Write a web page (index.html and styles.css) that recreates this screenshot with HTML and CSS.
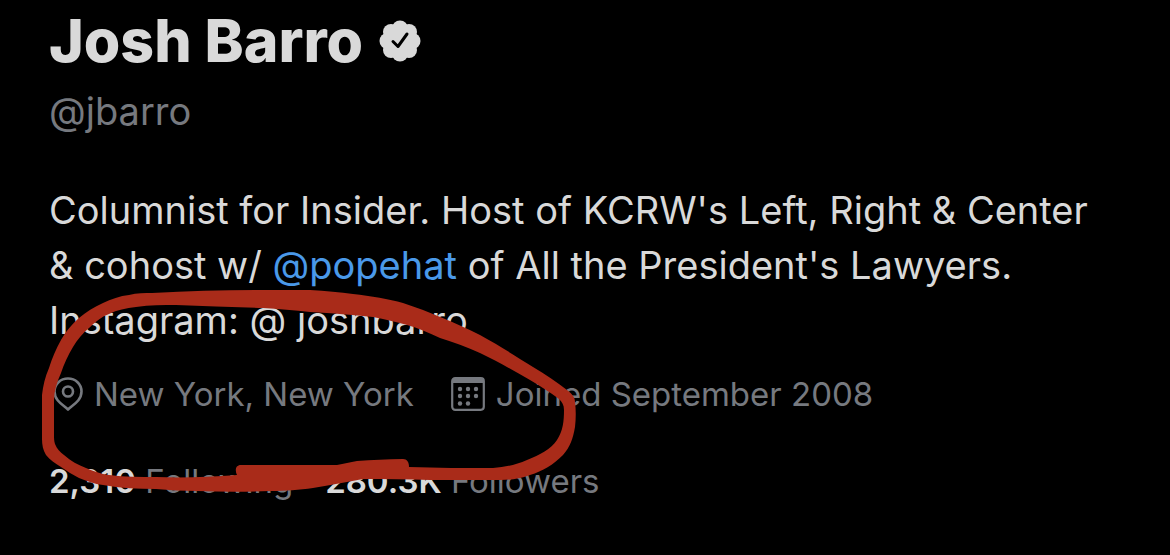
FILE: index.html
```html
<!DOCTYPE html>
<html lang="en">
<head>
<meta charset="utf-8">
<title>Josh Barro (@jbarro)</title>
<link rel="stylesheet" href="styles.css">
</head>
<body>
<main class="profile">
    <div class="name-row">
        <h1 class="name">Josh Barro</h1>
        <svg class="verified" viewBox="0 0 42 42" role="img" aria-label="Verified">
            <g fill="#d9d9d9">
                <circle cx="21" cy="21" r="16"/>
                <circle cx="21" cy="8.500" r="8"/>
                <circle cx="30" cy="12" r="8"/>
                <circle cx="33.500" cy="21" r="8"/>
                <circle cx="30" cy="30" r="8"/>
                <circle cx="21" cy="33.500" r="8"/>
                <circle cx="12" cy="30" r="8"/>
                <circle cx="8.500" cy="21" r="8"/>
                <circle cx="12" cy="12" r="8"/>
            </g>
            <path d="M14 21.500L19 26.500L28 14" fill="none" stroke="#000" stroke-width="3" stroke-linecap="round" stroke-linejoin="round"/>
        </svg>
    </div>
    <div class="handle">@jbarro</div>

    <p class="bio">
        Columnist for Insider. Host of KCRW's Left, Right &amp; Center<br>
        &amp; cohost w/ <a href="#popehat">@popehat</a> of All the President's Lawyers.<br>
        Instagram: @ joshbarro
    </p>

    <div class="meta">
        <span class="meta-item">
            <svg class="pin" viewBox="0 0 34 36" aria-hidden="true">
                <g fill="none" stroke="#76797f" stroke-width="2.6" stroke-linejoin="round">
                    <path d="M19 33.500C15 29.500 5.500 25 5.500 15.500C5.500 8 11.500 2.500 19 2.500C26.500 2.500 32.500 8 32.500 15.500C32.500 25 23 29.500 19 33.500Z"/>
                    <circle cx="19" cy="15.500" r="5"/>
                </g>
            </svg>
            New York, New York
        </span>
        <span class="meta-item">
            <svg class="calendar" viewBox="0 0 34 34" aria-hidden="true">
                <rect x="1.200" y="1.200" width="31.600" height="31.600" rx="3" fill="none" stroke="#76797f" stroke-width="2.200"/>
                <path d="M1 6V4Q1 1 4 1H30Q33 1 33 4V6Z" fill="#76797f"/>
                <g fill="#76797f">
                    <circle cx="9" cy="12" r="2.200"/>
                    <circle cx="17" cy="12" r="2.200"/>
                    <circle cx="25" cy="12" r="2.200"/>
                    <circle cx="9" cy="19" r="2.200"/>
                    <circle cx="17" cy="19" r="2.200"/>
                    <circle cx="25" cy="19" r="2.200"/>
                    <circle cx="9" cy="26.500" r="2.200"/>
                    <circle cx="17" cy="26.500" r="2.200"/>
                </g>
            </svg>
            Joined September 2008
        </span>
    </div>

    <div class="counts">
        <span><b>2,310</b> Following</span>
        <span><b>280.3K</b> Followers</span>
    </div>

    <!-- red marker loop around the location -->
    <svg class="marker" viewBox="0 0 540 206" aria-hidden="true">
        <path transform="translate(-40 -288)" fill="#a92b19" fill-rule="evenodd" d="M42 413V395C43 386 45 377 49 368C52 358 56 349 61 340C66 331 72 324 79 318C86 312 94 307 103 303C111 299 120 296 129 295C137 293 145 293 152 293C190 291 225 290 263 290C285 290 298 290 310 290C326 291 340 292 353 294C371 296 389 299 403 303C430 312 456 323 480 335C500 346 517 357 533 367C546 375 557 382 567 390C572 394 575 397 575 402C576 410 576 418 575 427C573 439 570 447 563 455C553 465 543 471 530 475C519 479 511 480 500 480H430C408 479 385 479 363 479C347 482 331 485 313 488C299 490 286 491 270 491C246 492 222 492 197 491C183 491 170 490 156 489C138 489 120 488 103 485C94 484 87 481 79 478C73 475 67 471 61 467C55 463 50 460 46 455C43 450 42 445 42 439Z
        M54 400V435C54 438 54 441 55 444C57 449 60 452 64 455C71 461 78 465 86 468C93 471 101 474 109 475C125 477 140 477 156 477C183 478 210 477 237 475C235 471 235 465 241 465H337C344 464 350 462 357 461C372 460 387 459 403 459C407 459 409 462 409 467C437 468 465 468 493 468C505 467 516 465 527 460C540 455 551 449 557 440C563 431 564 421 564 410C564 405 562 402 559 399C550 392 540 386 530 380C514 371 497 361 480 353C467 347 453 342 440 338C429 333 418 328 407 325C396 322 385 319 373 317C352 315 333 313 310 312C294 310 279 309 263 308C234 307 205 306 176 305C163 305 150 305 136 307C126 308 117 310 109 314C101 317 95 322 89 328C83 333 77 340 73 347C68 355 64 364 61 373C57 382 54 391 54 400Z"/>
    </svg>
</main>
</body>
</html>
```
FILE: styles.css
```css
body {
  margin: 0;
  background-color: #000;
  color: #d9d9d9;
  font-family: Inter, "Liberation Sans", sans-serif;
}

.profile {
  position: relative;
  padding: 7px 49px 32px;
}

.name-row {
  display: flex;
  align-items: center;
  gap: 16px;
}

.name {
  margin: 0;
  font-size: 59px;
  line-height: 68px;
  font-weight: 800;
}

.verified {
  width: 42px;
  height: 42px;
}

.handle {
  margin-top: 12px;
  font-size: 38px;
  line-height: 48px;
  color: #76797f;
}

.bio {
  margin: 48px 0 0;
  font-size: 38px;
  line-height: 55px;
  white-space: nowrap;
}

.bio a {
  color: #4a99e9;
  text-decoration: none;
}

.meta,
.counts {
  display: flex;
  font-size: 33px;
  line-height: 40px;
  color: #76797f;
  white-space: nowrap;
}

.meta {
  gap: 37px;
  margin-top: 26px;
}

.meta-item {
  display: flex;
  align-items: center;
  gap: 11px;
}

.pin {
  width: 34px;
  height: 36px;
}

.calendar {
  width: 34px;
  height: 34px;
}

.counts {
  gap: 32px;
  margin-top: 47px;
}

.counts b {
  font-weight: 600;
  color: #d9d9d9;
}

/* hand drawn loop, lies over the text */
.marker {
  position: absolute;
  left: 40px;
  top: 288px;
  width: 540px;
  height: 206px;
}
```
